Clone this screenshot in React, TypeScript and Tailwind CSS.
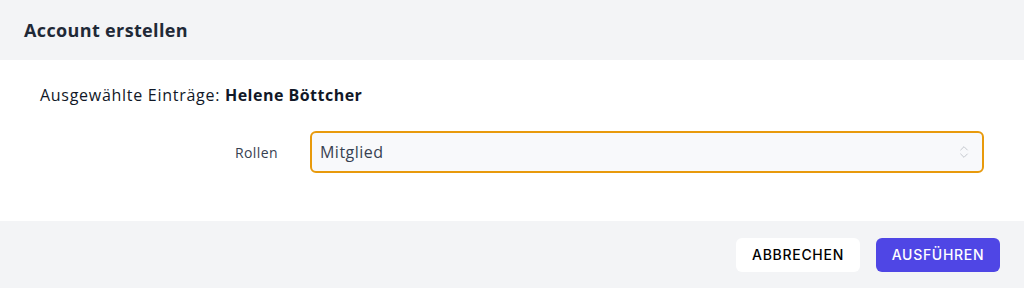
import { ChevronsUpDown } from 'lucide-react';

export default function App() {
    return (
        <div className="w-[1024px] h-[288px] flex flex-col bg-white" style={{ fontFamily: '"Open Sans", "Noto Sans", sans-serif' }}>
            {/* Header */}
            <div className="h-[60px] flex items-center px-6 bg-[#f3f4f6]">
                <h2 className="text-[18px] font-bold tracking-[0.02em] text-[#1f2937]">Account erstellen</h2>
            </div>

            {/* Body */}
            <div className="flex-1 px-10 pt-[23px]">
                <p className="text-[16px] tracking-[0.045em] text-[#111827]">
                    Ausgewählte Einträge: <span className="font-bold tracking-[0.03em]">Helene Böttcher</span>
                </p>
                <div className="flex items-center mt-[24px]">
                    <label className="w-[238px] text-right text-[14px] tracking-[0.03em] text-[#374151]">Rollen</label>
                    <div className="ml-8 flex-1 h-[42px] flex items-center justify-between pl-2 pr-[10px] rounded-md border-2 border-[#e89a0c] bg-[#f8f9fb]">
                        <span className="text-[16px] tracking-[0.03em] text-[#374151]">Mitglied</span>
                        <ChevronsUpDown className="w-4 h-4 text-[#c4c8ce]" strokeWidth={1.5} />
                    </div>
                </div>
            </div>

            {/* Footer */}
            <div className="h-[67px] flex items-center justify-end gap-4 px-6 bg-[#f3f4f6]">
                <button className="w-[124px] h-[34px] rounded-md bg-white text-[14px] font-medium tracking-wider text-black" style={{ fontFamily: '"Inter", sans-serif' }}>
                    ABBRECHEN
                </button>
                <button className="w-[124px] h-[34px] rounded-md bg-[#4f46e5] text-[14px] font-medium tracking-wider text-white" style={{ fontFamily: '"Inter", sans-serif' }}>
                    AUSFÜHREN
                </button>
            </div>
        </div>
    );
}
